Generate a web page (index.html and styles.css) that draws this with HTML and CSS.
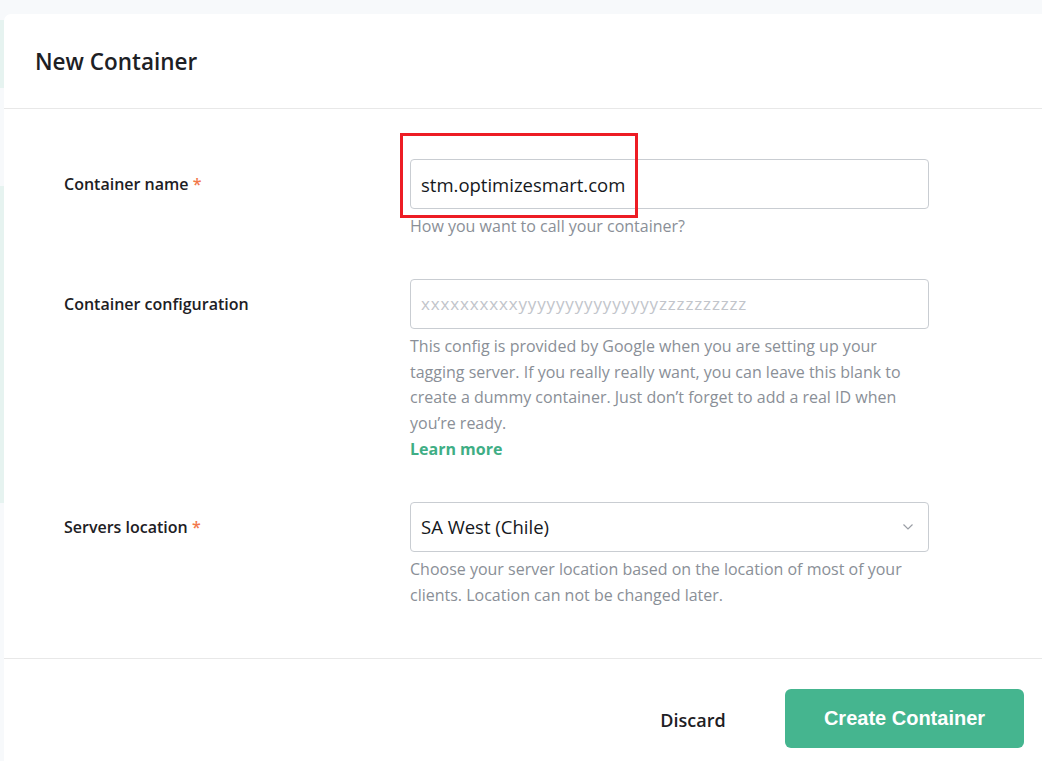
FILE: index.html
```html
<!DOCTYPE html>
<html lang="en">
<head>
<meta charset="utf-8">
<title>New Container</title>
<link rel="stylesheet" href="styles.css">
</head>
<body>
<div class="page">
  <div class="backdrop">
    <div class="bd bd-a"></div>
    <div class="bd bd-b"></div>
    <div class="bd bd-c"></div>
    <div class="bd bd-d"></div>
  </div>
  <div class="card">
    <div class="card-header">
      <h1 class="title">New Container</h1>
    </div>
    <div class="card-body">
      <div class="row">
        <label class="label">Container name <span class="req">*</span></label>
        <div class="field">
          <div class="input-wrap">
            <div class="input">stm.optimizesmart.com</div>
            <div class="highlight"></div>
          </div>
          <div class="help">How you want to call your container?</div>
        </div>
      </div>
      <div class="row">
        <label class="label">Container configuration</label>
        <div class="field">
          <div class="input placeholder">xxxxxxxxxxyyyyyyyyyyyyyyyzzzzzzzzzz</div>
          <div class="help">This config is provided by Google when you are setting up your tagging server. If you really really want, you can leave this blank to create a dummy container. Just don’t forget to add a real ID when you’re ready.<br><a class="learn" href="#">Learn more</a></div>
        </div>
      </div>
      <div class="row">
        <label class="label">Servers location <span class="req">*</span></label>
        <div class="field">
          <div class="input select">
            <span>SA West (Chile)</span>
            <svg class="chev" width="12" height="8" viewBox="0 0 12 8"><path d="M1.5 1.5 L6 6 L10.5 1.5" fill="none" stroke="#9a9ea5" stroke-width="1.2"/></svg>
          </div>
          <div class="help">Choose your server location based on the location of most of your clients. Location can not be changed later.</div>
        </div>
      </div>
    </div>
    <div class="card-footer">
      <button class="btn-discard">Discard</button>
      <button class="btn-create">Create Container</button>
    </div>
  </div>
</div>
</body>
</html>
```

FILE: styles.css
```css
* { box-sizing: border-box; }
html, body { margin: 0; padding: 0; }
body {
  background: #f7f9fb;
  font-family: "Open Sans", "Noto Sans", sans-serif;
  color: #1f2329;
  width: 1042px;
  height: 761px;
  overflow: hidden;
}
.page {
  display: flex;
  height: 761px;
}
.backdrop {
  width: 4px;
  flex: none;
  display: flex;
  flex-direction: column;
}
.bd { width: 4px; flex: none; }
.bd-a { height: 20px; }
.bd-b { height: 68px; background: #e6f3f0; }
.bd-c { height: 98px; }
.bd-d { height: 317px; background: #e6f3f0; }
.card {
  flex: 1;
  margin-top: 14px;
  background: #fff;
  border-top-left-radius: 7px;
  display: flex;
  flex-direction: column;
}
.card-header {
  height: 95px;
  border-bottom: 1px solid #e8e8e8;
  display: flex;
  align-items: center;
  padding-left: 31px;
}
.title {
  margin: 0;
  font-size: 22.5px;
  font-weight: 600;
  color: #1d2024;
}
.card-body {
  padding: 50px 0 50px 60px;
  border-bottom: 1px solid #e8e8e8;
  display: flex;
  flex-direction: column;
  gap: 39px;
}
.row {
  display: grid;
  grid-template-columns: 346px 519px;
  align-items: start;
}
.label {
  font-size: 16px;
  font-weight: 600;
  color: #1d2024;
  line-height: 50px;
}
.req { color: #f2784b; font-weight: 600; }
.field { display: flex; flex-direction: column; }
.input-wrap { position: relative; }
.input {
  height: 50px;
  border: 1px solid #c9cdd2;
  border-radius: 4px;
  padding: 0 10px;
  display: flex;
  align-items: center;
  font-size: 18.5px;
  color: #15181c;
  background: #fff;
}
.placeholder {
  color: #c2c5cb;
  font-size: 17px;
  letter-spacing: 0.85px;
}
.select { justify-content: space-between; padding-right: 14px; }
.chev { display: block; }
.highlight {
  position: absolute;
  left: -10px;
  top: -26px;
  width: 238px;
  height: 85px;
  border: 3.5px solid #ed1c24;
  pointer-events: none;
}
.help {
  margin-top: 5px;
  font-size: 16px;
  line-height: 25.8px;
  color: #8a8f97;
  padding-right: 18px;
}
.learn {
  color: #3fae85;
  font-weight: 700;
  text-decoration: none;
}
.card-footer {
  display: flex;
  justify-content: flex-end;
  align-items: flex-start;
  padding: 30px 18px 0 0;
}
button { font-family: inherit; border: 0; cursor: pointer; }
.btn-discard {
  background: transparent;
  font-size: 18px;
  font-weight: 600;
  color: #1d2024;
  height: 59px;
  width: 184px;
  padding-top: 3px;
}
.btn-create {
  background: #45b58f;
  color: #fff;
  font-family: "Liberation Sans", Arial, sans-serif;
  font-weight: 700;
  font-size: 20px;
  width: 239px;
  height: 59px;
  border-radius: 6px;
}
```
